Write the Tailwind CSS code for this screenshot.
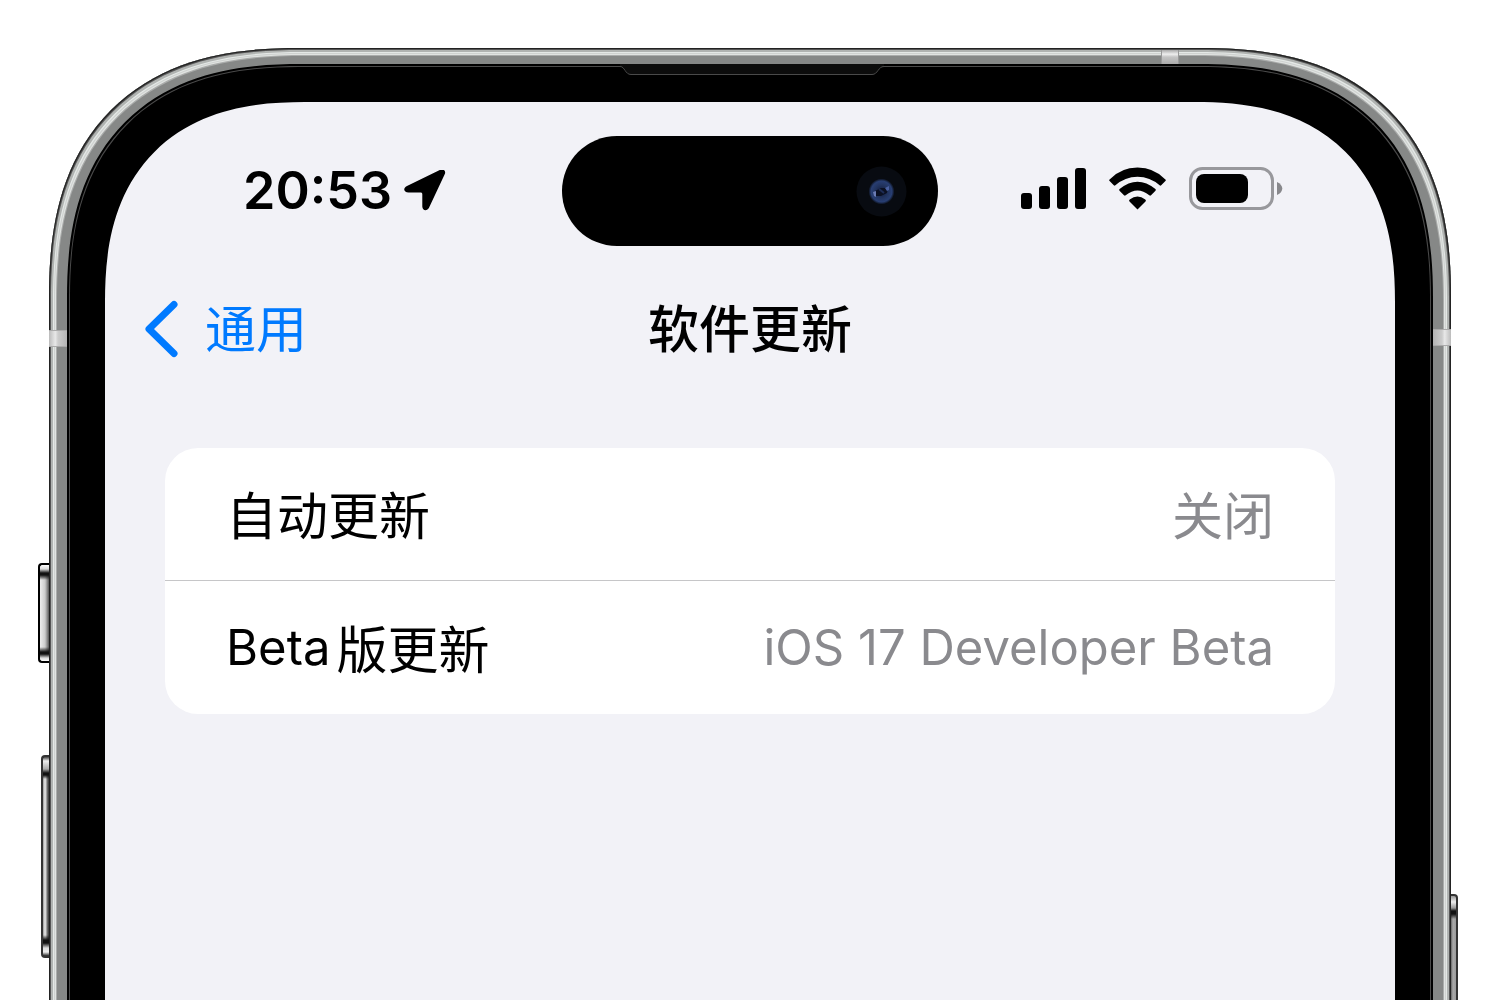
<!DOCTYPE html>
<html lang="zh-CN">
<head>
    <meta charset="UTF-8">
    <meta name="viewport" content="width=device-width, initial-scale=1">
    <title>软件更新</title>
    <script src="https://cdn.jsdelivr.net/npm/@tailwindcss/browser@4"></script>
</head>
<body class="bg-white text-black font-['Inter','Noto_Sans_CJK_SC',sans-serif]">

    <div class="flex h-screen overflow-hidden px-[49px] pt-12">

        <!-- Phone body, runs on below the window -->
        <div class="relative -mb-5 flex grow">

            <!-- Side buttons -->
            <div class="absolute -left-[11px] top-[515px] h-[100px] w-3 rounded-l-[4px] border-2 border-r-0 border-black bg-[linear-gradient(180deg,#fff_0,#ddd_4px,#111_8px,#111_10px,transparent_15px,transparent_82px,#111_87px,#111_89px,#ddd_93px,#fff_96px),linear-gradient(90deg,#eee,#ccc_50%,#777_80%,#333)]"></div>
            <div class="absolute -left-2 top-[707px] h-[203px] w-[9px] rounded-l-[4px] border-2 border-r-0 border-[#333] bg-[linear-gradient(180deg,#444_0,#eee_4px,#aaa_12px,#111_16px,#111_18px,transparent_22px,transparent_178px,#111_183px,#111_186px,#ddd_191px,#eee_195px,#222_199px),linear-gradient(90deg,#999,#eee_30%,#555_70%,#222)]"></div>
            <div class="absolute -right-[7px] top-[846px] h-[320px] w-2 rounded-r-[4px] border-2 border-l-0 border-[#333] bg-[linear-gradient(180deg,#999_0,#eee_6px,#999_12px,#111_15px,#111_18px,transparent_23px),linear-gradient(90deg,#444,#aaa_50%,#999)]"></div>

            <!-- Metal rim -->
            <div class="relative flex grow rounded-t-[250px] [corner-shape:superellipse(1.28)] bg-[#868887] px-[18px] pt-4 shadow-[inset_0_0_0_1px_#222,inset_0_0_0_2px_#555,inset_0_0_0_4px_#b0b3b1,inset_0_0_0_5px_#e4e8e6,inset_0_0_0_6px_#cfd2d0,inset_0_0_0_7px_#e0e3e1,inset_0_0_0_8px_#aaacab]">
                <div class="absolute left-0 top-[282px] h-[17px] w-[18px] border-y border-[#aaa] bg-[linear-gradient(90deg,#bbb,#e8e8e8_35%,#ccc_50%,#b4b4b4)]"></div>
                <div class="absolute right-0 top-[281px] h-[17px] w-[18px] border-y border-[#aaa] bg-[linear-gradient(270deg,#bbb,#e8e8e8_35%,#ccc_50%,#b4b4b4)]"></div>
                <div class="absolute right-[272px] top-[2px] h-[14px] w-[18px] border-x border-[#999] bg-[linear-gradient(180deg,#aaa,#eee_30%,#c4c4c4_50%,#aaa)]"></div>

                <!-- Bezel -->
                <div class="relative flex grow rounded-t-[234px] [corner-shape:superellipse(1.28)] bg-black px-[38px] pt-[38px]">
                    <div class="absolute inset-x-[2px] top-[2px] bottom-0 rounded-t-[232px] [corner-shape:superellipse(1.28)] border border-b-0 border-[#4a4a4a]"></div>
                    <svg class="absolute left-1/2 top-0 -ml-[130px]" width="264" height="12" viewBox="0 0 264 12" fill="none" aria-hidden="true">
                        <path d="M0 0H264V2.500C258 2.500 258 10.500 252 10.500H11C6 10.500 6 2.500 0 2.500Z" fill="#0c0c0c"/>
                        <path d="M0 2.500C5 2.500 5 10.500 11 10.500H252C258 10.500 258 2.500 264 2.500" stroke="#4a4a4a"/>
                    </svg>

                    <!-- Screen -->
                    <div class="relative grow rounded-t-[200px] [corner-shape:superellipse(1.28)] bg-[#f2f2f7] pt-[34px]">

                        <header class="grid grid-cols-[1fr_auto_1fr] items-center">
                            <div class="flex items-center gap-3 pl-[138px]">
                                <span class="text-[52px] leading-[64px] font-semibold">20:53</span>
                                <svg width="42" height="42" viewBox="0 0 42 42" aria-hidden="true">
                                    <path d="M3.500 15.800L36 -.1C39.500 -1.600 42.300 1 40.700 4.300L25 37.800C23.200 41.600 18.300 40.800 18.300 36.500V24.600C18.300 23 17.800 22.500 16.200 22.500H4.600C-.6 22.500 -1.400 18 3.500 15.800Z"/>
                                </svg>
                            </div>

                            <div class="flex h-[110px] w-[376px] items-center justify-end rounded-[55px] bg-black pr-[31px]">
                                <svg width="51" height="51" viewBox="0 0 51 51" aria-hidden="true">
                                    <defs>
                                        <radialGradient id="lens">
                                            <stop offset="0" stop-color="#101a38"/>
                                            <stop offset=".5" stop-color="#22345f"/>
                                            <stop offset=".8" stop-color="#283e72"/>
                                            <stop offset="1" stop-color="#080b11"/>
                                        </radialGradient>
                                    </defs>
                                    <circle cx="25.500" cy="25.500" r="25" fill="#080b11"/>
                                    <circle cx="25.500" cy="25.500" r="13" fill="url(#lens)"/>
                                    <path d="M19 25L25 22L32 22L31 27L25 30L20 30Z" fill="#0b1022"/>
                                    <path d="M17 26L20 25L20 31L18 30Z" fill="#6b7cb4"/>
                                    <path d="M29 22L33 20L33 24L31 25Z" fill="#4a60a0"/>
                                    <path d="M23 23L28 27" stroke="#1d2c55" stroke-width="2"/>
                                </svg>
                            </div>

                            <div class="flex items-center justify-end gap-[22px] pr-[112px] pb-[6px]">
                                <svg width="66" height="42" viewBox="0 0 66 42" aria-hidden="true">
                                    <rect x="0" y="26" width="11" height="16" rx="3"/>
                                    <rect x="18" y="19" width="11" height="23" rx="3"/>
                                    <rect x="36" y="10" width="11" height="32" rx="3"/>
                                    <rect x="54" y="1" width="11" height="41" rx="3"/>
                                </svg>
                                <svg width="58" height="43" viewBox="0 0 58 43" aria-hidden="true">
                                    <path d="M28.500 42.500L20.500 34.500Q19.500 33.500 20.700 32.600Q28.500 26.600 36.300 32.600Q37.500 33.500 36.500 34.500Z"/>
                                    <path d="M10.500 23.700Q9.700 22.900 10.600 22.100Q28.500 7.500 46.400 22.100Q47.300 22.900 46.500 23.700L42 28.200Q41.200 29 40.300 28.300Q28.500 18.700 16.700 28.300Q15.800 29 15 28.200Z"/>
                                    <path d="M.6 14Q-.2 13.200 .6 12.500Q12 .6 28.500 .6Q45 .6 56.400 12.500Q57.200 13.200 56.400 14L52.200 18.300Q51.400 19 50.600 18.300Q41 9.700 28.500 9.700Q16 9.700 6.400 18.300Q5.600 19 4.800 18.300Z"/>
                                </svg>
                                <svg width="94" height="43" viewBox="0 0 94 43" aria-hidden="true">
                                    <rect x="1.500" y="1.500" width="82" height="40" rx="12" fill="none" stroke="#98989c" stroke-width="3"/>
                                    <rect x="7" y="7" width="52" height="29" rx="8"/>
                                    <path d="M88 15C95 18 95 25 88 28Z" fill="#88888c"/>
                                </svg>
                            </div>
                        </header>

                        <nav class="mt-[46px] grid h-[74px] grid-cols-[1fr_auto_1fr] items-center text-[51px] leading-[64px]">
                            <a href="#" class="flex items-center gap-[26px] pl-10 text-[#007aff]">
                                <svg width="34" height="58" viewBox="0 0 34 58" fill="none" stroke="currentColor" stroke-width="7" stroke-linecap="round" stroke-linejoin="round" aria-hidden="true">
                                    <path d="M29 4.500L4 29L29 53.500"/>
                                </svg>
                                <span class="pt-[2px]">通用</span>
                            </a>
                            <h1 class="pt-[2px] font-medium">软件更新</h1>
                        </nav>

                        <main class="mx-[60px] mt-[82px] rounded-[33px] bg-white text-[51px] leading-[64px]">
                            <a href="#" class="flex h-[133px] items-center justify-between border-b border-[#c6c6c8] px-[61px] pt-[6px]">
                                <span>自动更新</span>
                                <span class="text-[#8a8a8e]">关闭</span>
                            </a>
                            <a href="#" class="flex h-[133px] items-center justify-between px-[61px]">
                                <span class="flex items-center gap-[6px]"><span class="text-[49px]">Beta</span><span class="pt-[6px]">版更新</span></span>
                                <span class="text-[49px] text-[#8a8a8e]">iOS 17 Developer Beta</span>
                            </a>
                        </main>

                    </div>
                </div>
            </div>
        </div>
    </div>

</body>
</html>
